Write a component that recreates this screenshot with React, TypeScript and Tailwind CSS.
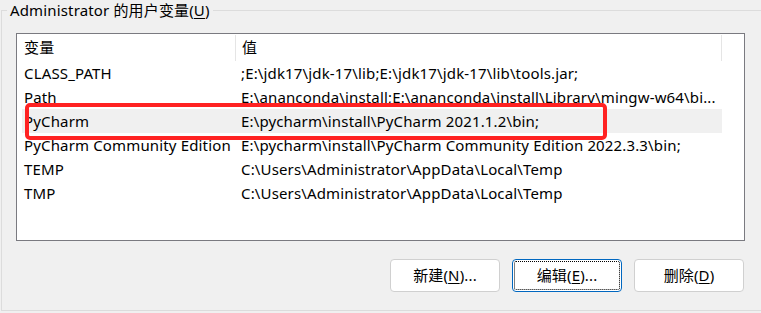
const rows = [
  { name: 'CLASS_PATH', value: ';E:\\jdk17\\jdk-17\\lib;E:\\jdk17\\jdk-17\\lib\\tools.jar;' },
  { name: 'Path', value: 'E:\\ananconda\\install;E:\\ananconda\\install\\Library\\mingw-w64\\bi...' },
  { name: 'PyCharm', value: 'E:\\pycharm\\install\\PyCharm 2021.1.2\\bin;', selected: true },
  { name: 'PyCharm Community Edition', value: 'E:\\pycharm\\install\\PyCharm Community Edition 2022.3.3\\bin;' },
  { name: 'TEMP', value: 'C:\\Users\\Administrator\\AppData\\Local\\Temp' },
  { name: 'TMP', value: 'C:\\Users\\Administrator\\AppData\\Local\\Temp' },
];

function Btn({ label, hot, rest, focused }: { label: string; hot: string; rest: string; focused?: boolean }) {
  return (
    <button
      className={
        focused
          ? 'w-[110px] h-[33px] rounded-[4px] border border-[#0067c0] bg-white p-[1px]'
          : 'w-[110px] h-[33px] rounded-[4px] border border-[#d0d0d0] bg-white'
      }
    >
      {focused ? (
        <span className="flex h-full w-full items-center justify-center rounded-[2px] border border-dotted border-black">
          {label}(<span className="underline underline-offset-2">{hot}</span>){rest}
        </span>
      ) : (
        <span>
          {label}(<span className="underline underline-offset-2">{hot}</span>){rest}
        </span>
      )}
    </button>
  );
}

export default function App() {
  return (
    <div
      className="relative w-[761px] h-[313px] overflow-hidden bg-[#f0f0f0] text-[15px] tracking-[0.15px] text-black"
      style={{ fontFamily: '"Noto Sans", "Noto Sans CJK SC", sans-serif' }}
    >
      {/* group box */}
      <div className="relative ml-[1px] mt-[10px] w-[790px] h-[301px] border border-[#dcdcdc] pl-[14px] pt-[22px]">
        <span className="absolute left-[5px] top-[-13px] bg-[#f0f0f0] px-[3px] leading-[24px]">
          Administrator 的用户变量(<span className="underline underline-offset-2">U</span>)
        </span>

        {/* list view */}
        <div className="w-[729px] h-[208px] border border-[#7a7a80] bg-white pl-[5px]">
          <div className="flex h-[27px] items-center">
            <div className="w-[213px] pl-[2px] leading-none">变量</div>
            <div className="h-[26px] w-px self-start mt-[1px] bg-[#e5e5e5]" />
            <div className="w-[485px] pl-[6px] leading-none">值</div>
            <div className="h-[26px] w-px self-start mt-[1px] bg-[#e5e5e5]" />
          </div>
          {rows.map((r) => (
            <div
              key={r.name}
              className={
                r.selected
                  ? 'flex h-[24px] w-[700px] items-center bg-[#f0f0f0] whitespace-nowrap'
                  : 'flex h-[24px] w-[700px] items-center whitespace-nowrap'
              }
            >
              <div className="w-[214px] overflow-hidden pl-[2px]">{r.name}</div>
              <div className="w-[486px] overflow-hidden pl-[5px]">{r.value}</div>
            </div>
          ))}
        </div>

        {/* buttons */}
        <div className="mt-[18px] flex w-[728px] justify-end gap-[12px]">
          <Btn label="新建" hot="N" rest="..." />
          <Btn label="编辑" hot="E" rest="..." focused />
          <Btn label="删除" hot="D" rest="" />
        </div>
      </div>

      {/* red highlight annotation */}
      <div className="absolute left-[25px] top-[103px] h-[37px] w-[582px] rounded-[5px] border-[4px] border-[#ff2222]" />
    </div>
  );
}
